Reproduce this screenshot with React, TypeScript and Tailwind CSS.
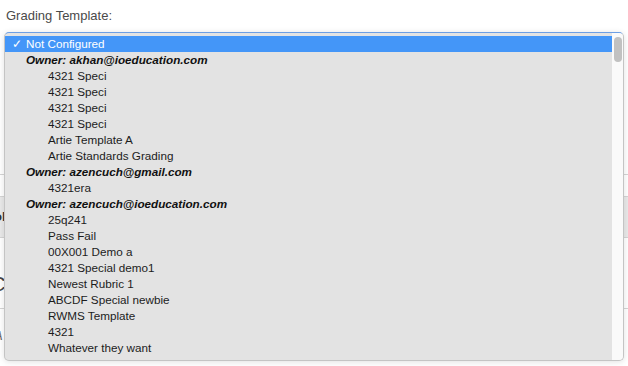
import React from 'react';

type Row = { kind: 'selected' | 'owner' | 'item'; label: string };

const rows: Row[] = [
  { kind: 'selected', label: 'Not Configured' },
  { kind: 'owner', label: 'Owner: akhan@ioeducation.com' },
  { kind: 'item', label: '4321 Speci' },
  { kind: 'item', label: '4321 Speci' },
  { kind: 'item', label: '4321 Speci' },
  { kind: 'item', label: '4321 Speci' },
  { kind: 'item', label: 'Artie Template A' },
  { kind: 'item', label: 'Artie Standards Grading' },
  { kind: 'owner', label: 'Owner: azencuch@gmail.com' },
  { kind: 'item', label: '4321era' },
  { kind: 'owner', label: 'Owner: azencuch@ioeducation.com' },
  { kind: 'item', label: '25q241' },
  { kind: 'item', label: 'Pass Fail' },
  { kind: 'item', label: '00X001 Demo a' },
  { kind: 'item', label: '4321 Special demo1' },
  { kind: 'item', label: 'Newest Rubric 1' },
  { kind: 'item', label: 'ABCDF Special newbie' },
  { kind: 'item', label: 'RWMS Template' },
  { kind: 'item', label: '4321' },
  { kind: 'item', label: 'Whatever they want' }
];

function OptionRow({ row }: { row: Row }) {
  if (row.kind === 'selected') {
    return (
      <div className="h-[16px] flex items-center bg-[#4496f8] text-white">
        <span className="w-[21px] pl-[7px] text-[12px]">✓</span>
        <span>{row.label}</span>
      </div>
    );
  }
  if (row.kind === 'owner') {
    return (
      <div className="h-[16px] flex items-center pl-[21px] font-bold italic text-[#111]">
        {row.label}
      </div>
    );
  }
  return (
    <div className="h-[16px] flex items-center pl-[43px] text-[#1c1c1c]">{row.label}</div>
  );
}

export default function App() {
  return (
    <div
      className="w-[628px] h-[366px] bg-white overflow-hidden relative"
      style={{ fontFamily: '"Liberation Sans", Arial, sans-serif' }}
    >
      <div className="pt-[8px] pl-[6px] h-[32px] text-[13px] leading-[16px] text-[#4a4a4a]">
        Grading Template:
      </div>

      {/* page content underneath the open menu */}
      <div className="relative">
        <div className="h-[142px]" />
        <div className="h-[22px] border-t border-[#d4d4d4]" />
        <div className="h-[41px] border-t border-[#d4d4d4] bg-[#e9e9e9] flex items-center text-[13px] font-bold text-[#333]">
          <span className="-ml-[6px]">ol</span>
        </div>
        <div className="h-[71px] border-t border-[#d4d4d4] flex items-center text-[20px] text-[#444]">
          <span className="-ml-[9px] mt-[22px]">C</span>
        </div>
        <div className="h-[58px] border-t border-[#d4d4d4] text-[13px] italic text-[#666]">
          <span className="block -ml-[6px] pt-[17px]">A</span>
        </div>

        <div className="absolute top-0 left-[4px] w-[620px] h-[329px] bg-[#e3e3e3] rounded-[5px] border border-[#c4c4c4] border-t-[#6d9fe4] shadow-[0_1px_6px_rgba(0,0,0,0.12)] flex overflow-hidden">
          <div className="flex-1 pt-[3px] text-[11.7px] leading-[16px]">
            {rows.map((r, i) => (
              <OptionRow key={i} row={r} />
            ))}
          </div>
          <div className="w-[11px] bg-[#fafafa] pt-[4px] flex justify-center">
            <div className="w-[8px] h-[25px] rounded-full bg-[#c1c1c1]" />
          </div>
        </div>
      </div>
    </div>
  );
}
